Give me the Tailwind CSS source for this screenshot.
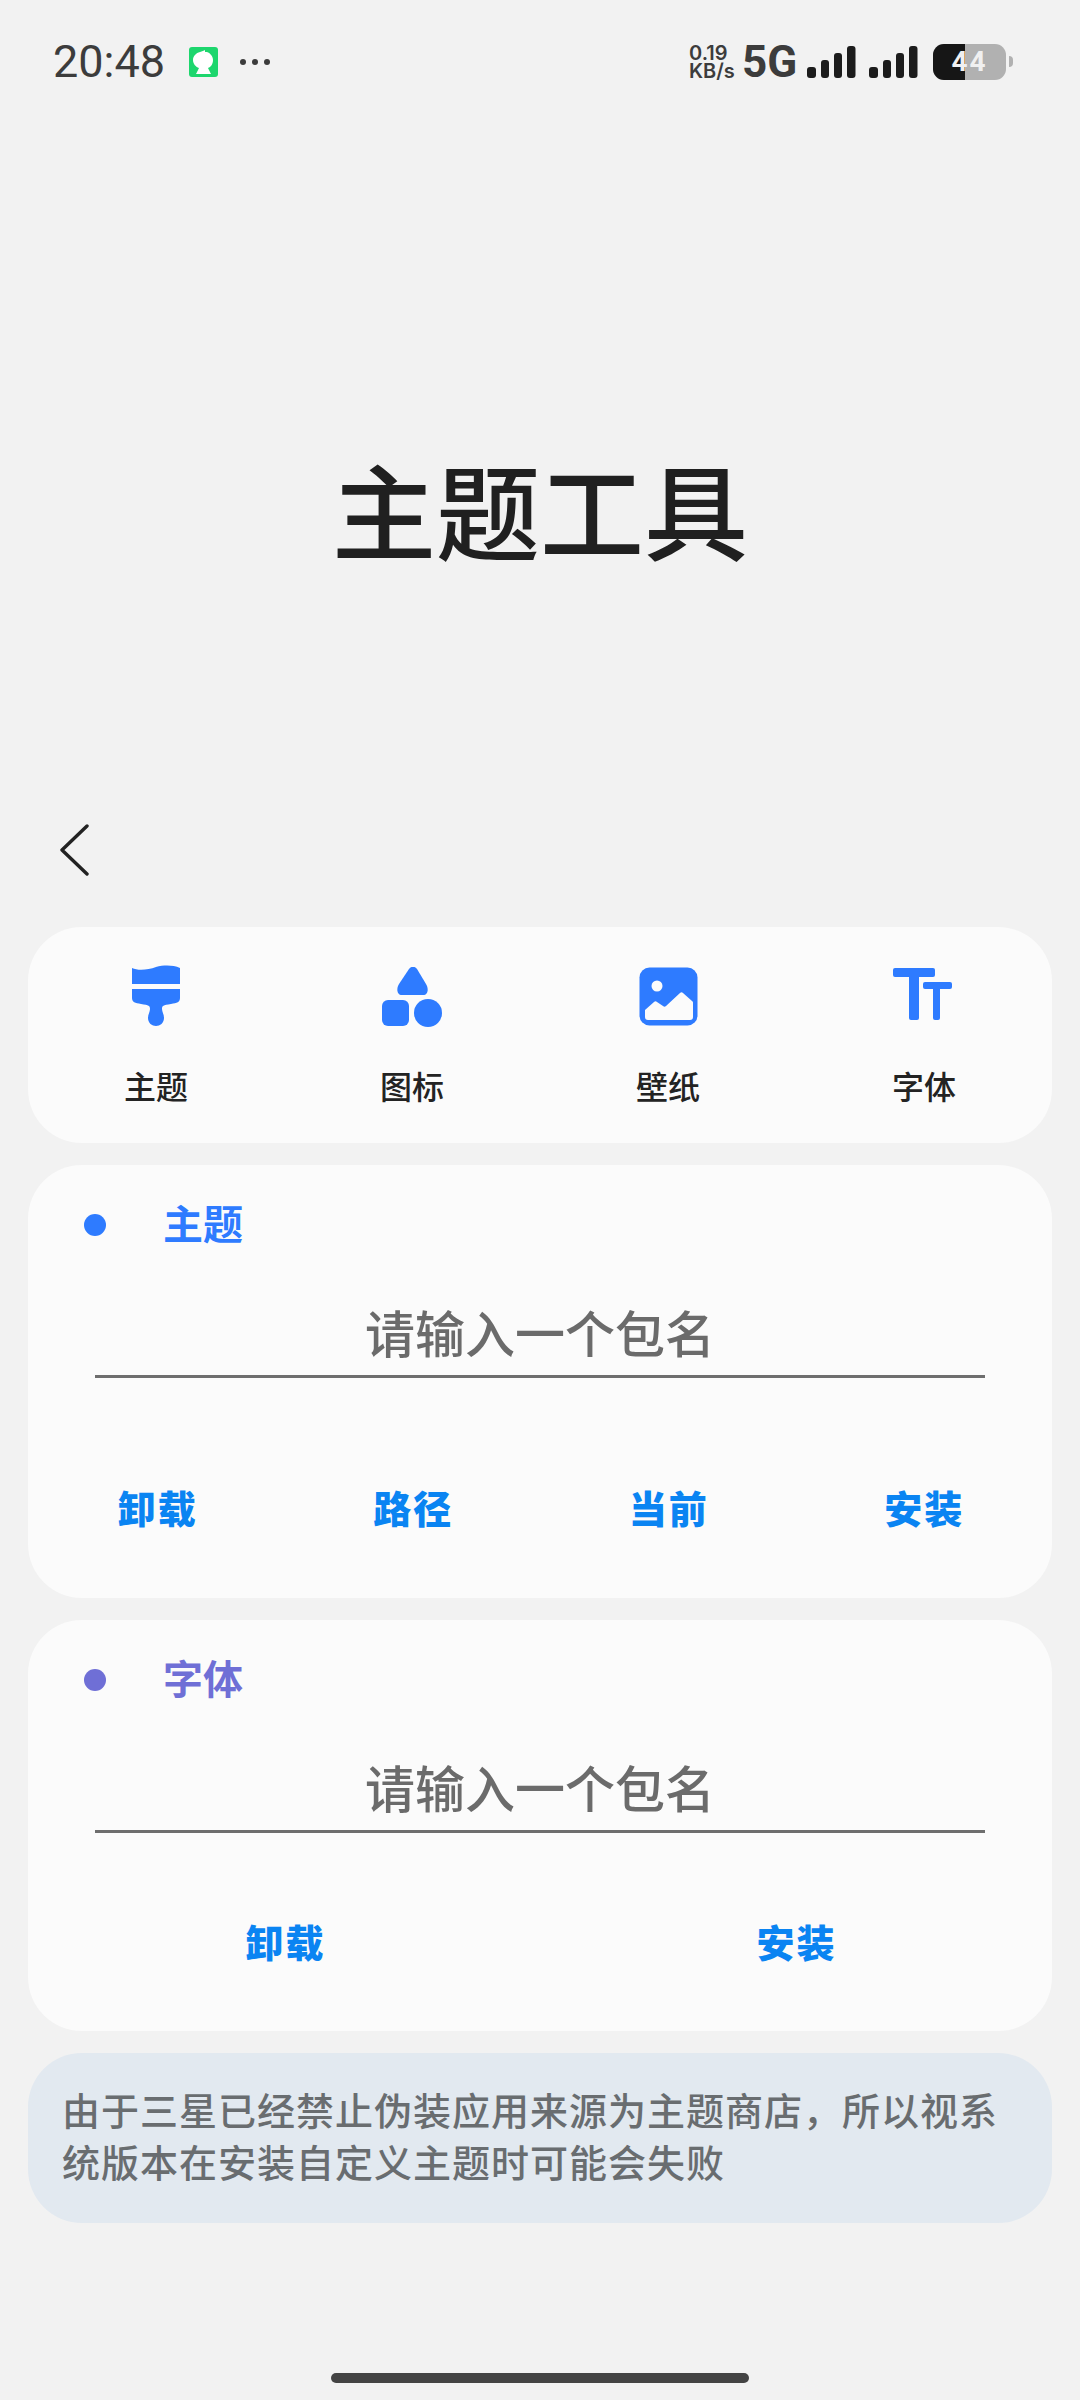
<!DOCTYPE html>
<html><head><meta charset="utf-8"><script src="https://cdn.jsdelivr.net/npm/@tailwindcss/browser@4"></script></head>
<body class="bg-[#f2f2f2] font-['Roboto','Noto_Sans_CJK_SC',sans-serif]">
<div class="w-[1080px] h-[2400px] flex flex-col overflow-hidden relative">
  <div class="h-[120px] shrink-0 flex items-center pl-[53px] pr-[67px] pt-[3px]">
    <span class="text-[45px] leading-none text-[#3c3c3c] font-['Roboto'] w-[116px]">20:48</span>
    <svg class="ml-[20px]" width="29" height="30" viewBox="0 0 29 30"><rect width="29" height="30" rx="3" fill="#1dd66d"/><path d="M16 3c-1 1-3 1-5 2C7 6 4 9 4 13c0 4 3 7 6 8l-3 6h15l-3-6c3-1 5-4 5-8 0-4-3-7-6-8l-2 0z" fill="#fff"/></svg>
    <div class="ml-[22px] flex gap-[6px]"><i class="w-[6px] h-[6px] rounded-full bg-[#3c3c3c]"></i><i class="w-[6px] h-[6px] rounded-full bg-[#3c3c3c]"></i><i class="w-[6px] h-[6px] rounded-full bg-[#3c3c3c]"></i></div>
    <div class="ml-auto flex items-center">
      <div class="flex flex-col items-start font-['Inter'] font-semibold text-[20px] leading-[18px] text-[#3c3c3c] w-[53px] -ml-[1px]"><span>0.19</span><span>KB/s</span></div>
      <span class="font-['Roboto'] font-bold text-[44px] leading-none text-[#3c3c3c] w-[65px]">5G</span>
      <svg width="49" height="32" viewBox="0 0 49 32" fill="#1c1c1c"><rect x="0" y="21" width="9" height="11" rx="3"/><rect x="14" y="14" width="8" height="18" rx="3"/><rect x="27" y="7" width="8" height="25" rx="3"/><rect x="40" y="0" width="8.500" height="32" rx="3"/></svg>
      <svg class="ml-[13px]" width="49" height="32" viewBox="0 0 49 32" fill="#1c1c1c"><rect x="0" y="21" width="9" height="11" rx="3"/><rect x="14" y="14" width="8" height="18" rx="3"/><rect x="27" y="7" width="8" height="25" rx="3"/><rect x="40" y="0" width="8.500" height="32" rx="3"/></svg>
      <div class="ml-[15px] relative w-[73px] h-[36px] rounded-[11px] bg-[#b1b1b1] overflow-hidden flex items-center justify-center">
        <div class="absolute left-0 top-0 bottom-0 w-[32px] bg-[#161616]"></div>
        <span class="relative font-['Roboto'] font-bold text-[28px] leading-none text-[#f0f0f0] tracking-[2px]">44</span>
      </div>
      <div class="ml-[3px] w-[4px] h-[11px] rounded-r-full bg-[#b1b1b1]"></div>
    </div>
  </div>

  <div class="h-[679px] shrink-0 flex items-center justify-center pt-[117px]">
    <h1 class="text-[104px] leading-none font-medium text-[#202020]">主题工具</h1>
  </div>

  <div class="h-[128px] shrink-0 pl-[60px] pt-[25px]">
    <svg width="29" height="52" viewBox="0 0 29 52" fill="none" stroke="#222" stroke-width="3.4" stroke-linecap="round" stroke-linejoin="round"><path d="M27 2 L2 26 L27 50"/></svg>
  </div>

  <div class="mx-[28px] flex flex-col gap-[22px]">
    <div class="h-[216px] rounded-[54px] bg-[#fbfbfb] grid grid-cols-4 pt-[38px]">
      <div class="flex flex-col items-center">
        <div class="h-[62px] -ml-[1px]"><svg width="49" height="62" viewBox="0 0 49 62" fill="#2e7bff"><path d="M1 3c6 3 16 2 24-1 8-2 17-2 24 1v16H1z"/><path d="M1 24h48v9c0 4-3 5-9 6-8 1-9 2-9 5 0 3 2 5 2 9 0 5-4 8-8 8s-8-3-8-8c0-4 2-6 2-9 0-3-1-4-9-5-6-1-9-2-9-6z"/></svg></div>
        <span class="mt-[41px] text-[32px] leading-[40px] font-medium text-[#232323]">主题</span>
      </div>
      <div class="flex flex-col items-center">
        <div class="h-[62px] pt-[2px]"><svg width="61" height="60" viewBox="0 0 61 60" fill="#2e7bff"><path d="M27 2c2-3 6-3 8 0l9 15c3 5 2 11-3 11H20c-5 0-6-6-3-11z"/><rect x="0" y="33" width="27" height="26" rx="6"/><circle cx="46" cy="46" r="14"/></svg></div>
        <span class="mt-[41px] text-[32px] leading-[40px] font-medium text-[#232323]">图标</span>
      </div>
      <div class="flex flex-col items-center">
        <div class="h-[62px] pt-[2px]"><svg width="59" height="59" viewBox="0 0 59 59"><rect width="58" height="58" x="0.500" y="0.500" rx="10" fill="#2e7bff"/><circle cx="18" cy="19" r="5.500" fill="#fbfbfb"/><path d="M6 43l9-8c1-1 2-1 3 0l6 4c1 1 2 1 3 0l14-13c1-1 2-1 3 0l9 8c1 1 1 1 1 2v14c0 2-1 3-3 3H9c-2 0-3-1-3-3z" fill="#fbfbfb"/></svg></div>
        <span class="mt-[41px] text-[32px] leading-[40px] font-medium text-[#232323]">壁纸</span>
      </div>
      <div class="flex flex-col items-center">
        <div class="h-[62px] pt-[3px] -ml-[3px]"><svg width="59" height="52" viewBox="0 0 59 52" fill="#2e7bff"><rect x="0" y="0" width="42" height="9" rx="2"/><rect x="16" y="0" width="10" height="52" rx="2"/><rect x="30" y="14" width="29" height="7" rx="2"/><rect x="40" y="14" width="7" height="38" rx="2"/></svg></div>
        <span class="mt-[41px] text-[32px] leading-[40px] font-medium text-[#232323]">字体</span>
      </div>
    </div>

    <div class="h-[433px] rounded-[54px] bg-[#fbfbfb] flex flex-col">
      <div class="flex items-center h-[60px] mt-[30px] pl-[56px]"><i class="w-[22px] h-[22px] rounded-full bg-[#2e7bff]"></i><span class="ml-[57px] mt-[2px] text-[40px] leading-none font-bold text-[#2e7bff]">主题</span></div>
      <div class="mx-[67px] mt-[55px] h-[68px] pb-[14px] border-b-[3px] border-[#6e6e6e] flex items-center justify-center text-[50px] leading-none font-medium text-[#6b6b6b]">请输入一个包名</div>
      <div class="grid grid-cols-4 mt-[113px] text-[38px] leading-none font-black text-[#0a84f2] text-center tracking-[2px] pl-[2px]"><span>卸载</span><span>路径</span><span>当前</span><span>安装</span></div>
    </div>

    <div class="h-[411px] rounded-[54px] bg-[#fbfbfb] flex flex-col">
      <div class="flex items-center h-[60px] mt-[30px] pl-[56px]"><i class="w-[22px] h-[22px] rounded-full bg-[#6f6fd6]"></i><span class="ml-[57px] mt-[2px] text-[40px] leading-none font-bold text-[#6f6fd6]">字体</span></div>
      <div class="mx-[67px] mt-[55px] h-[68px] pb-[14px] border-b-[3px] border-[#6e6e6e] flex items-center justify-center text-[50px] leading-none font-medium text-[#6b6b6b]">请输入一个包名</div>
      <div class="grid grid-cols-2 mt-[92px] text-[38px] leading-none font-black text-[#0a84f2] text-center tracking-[2px] pl-[2px]"><span>卸载</span><span>安装</span></div>
    </div>

    <div class="h-[170px] rounded-[54px] bg-[#e2e9f0] pl-[34px] pr-[36px] pt-[33px] text-[38px] leading-[52px] tracking-[1px] font-medium text-[#696d70]">由于三星已经禁止伪装应用来源为主题商店，所以视系统版本在安装自定义主题时可能会失败</div>
  </div>

  <div class="absolute left-[331px] top-[2373px] w-[418px] h-[10px] rounded-full bg-[#444444]"></div>
</div>
</body></html>
